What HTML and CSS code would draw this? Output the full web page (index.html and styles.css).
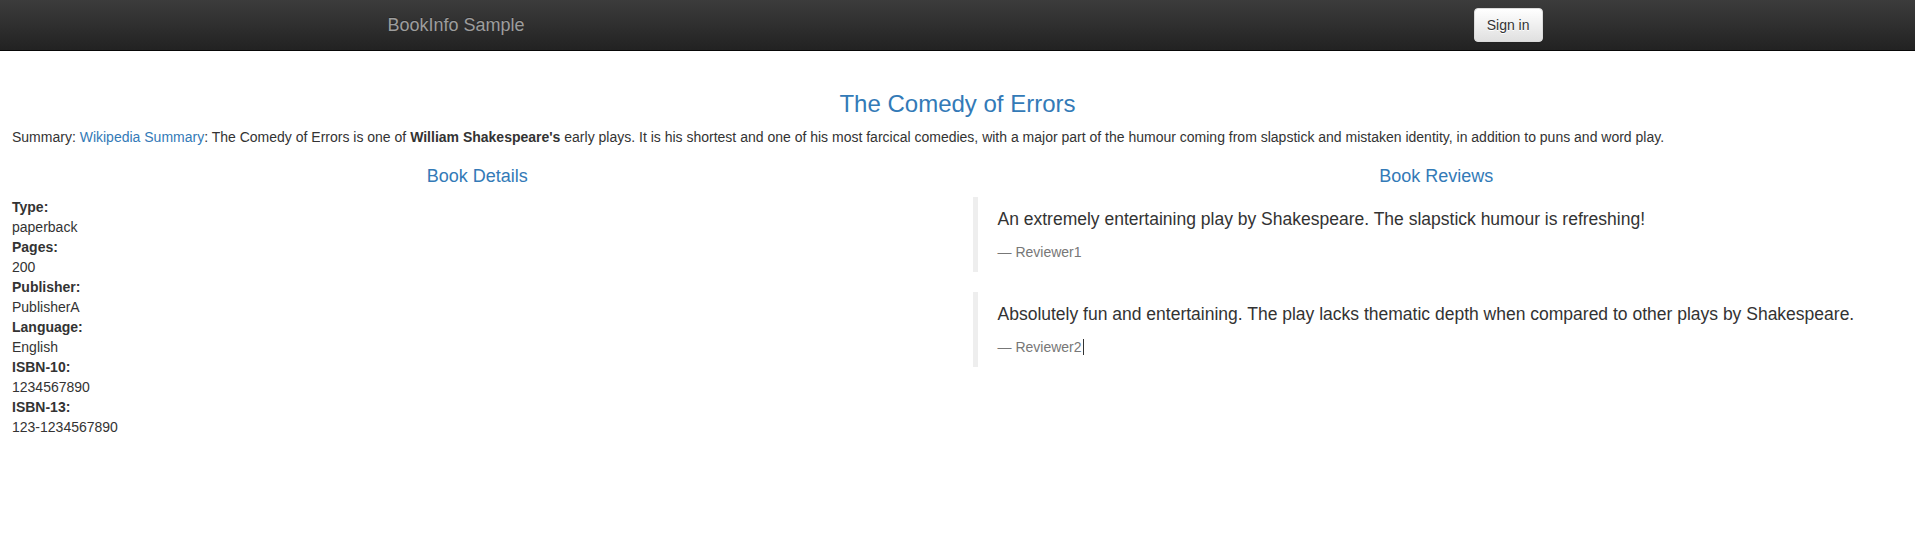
FILE: index.html
```html
<!DOCTYPE html>
<html lang="en">
<head>
<meta charset="utf-8">
<title>Simple Bookstore App</title>
<link rel="stylesheet" href="styles.css">
</head>
<body>
<nav class="navbar">
  <div class="nav-container">
    <a class="navbar-brand" href="#">BookInfo Sample</a>
    <button type="button" class="btn-signin">Sign in</button>
  </div>
</nav>

<main class="page">
  <section class="intro">
    <h3 class="title">The Comedy of Errors</h3>
    <p class="summary">Summary: <a href="#">Wikipedia Summary</a>: The Comedy of Errors is one of <b>William Shakespeare's</b> early plays. It is his shortest and one of his most farcical comedies, with a major part of the humour coming from slapstick and mistaken identity, in addition to puns and word play.</p>
  </section>

  <section class="columns">
    <div class="col col-left">
      <h4 class="col-title">Book Details</h4>
      <dl class="details">
        <dt>Type:</dt><dd>paperback</dd>
        <dt>Pages:</dt><dd>200</dd>
        <dt>Publisher:</dt><dd>PublisherA</dd>
        <dt>Language:</dt><dd>English</dd>
        <dt>ISBN-10:</dt><dd>1234567890</dd>
        <dt>ISBN-13:</dt><dd>123-1234567890</dd>
      </dl>
    </div>
    <div class="col col-right">
      <h4 class="col-title">Book Reviews</h4>
      <blockquote class="review">
        <p>An extremely entertaining play by Shakespeare. The slapstick humour is refreshing!</p>
        <small>Reviewer1</small>
      </blockquote>
      <blockquote class="review">
        <p>Absolutely fun and entertaining. The play lacks thematic depth when compared to other plays by Shakespeare.</p>
        <small>Reviewer2<span class="caret"></span></small>
      </blockquote>
    </div>
  </section>
</main>
</body>
</html>
```

FILE: styles.css
```css
* {
  box-sizing: border-box;
}

html, body {
  margin: 0;
  padding: 0;
}

body {
  font-family: "Liberation Sans", Arial, Helvetica, sans-serif;
  font-size: 14px;
  line-height: 1.42857143;
  color: #333;
  background: #fff;
}

a {
  color: #337ab7;
  text-decoration: none;
}

/* Navbar */
.navbar {
  height: 51px;
  background-color: #222;
  background-image: linear-gradient(to bottom, #3c3c3c 0, #222 100%);
  border-bottom: 1px solid #080808;
  margin-bottom: 20px;
}

.nav-container {
  width: 1170px;
  margin: 0 auto;
  padding: 0 15px;
  display: flex;
  justify-content: space-between;
  align-items: flex-start;
}

.navbar-brand {
  display: block;
  height: 50px;
  padding: 15px;
  margin-left: -15px;
  font-size: 18px;
  line-height: 20px;
  color: #9d9d9d;
  text-shadow: 0 -1px 0 rgba(0, 0, 0, .25);
}

.btn-signin {
  margin: 8px -15px 0 0;
  height: 34px;
  padding: 6px 12px;
  font-family: inherit;
  font-size: 14px;
  line-height: 20px;
  color: #333;
  background-color: #fff;
  background-image: linear-gradient(to bottom, #fff 0, #e0e0e0 100%);
  border: 1px solid #dbdbdb;
  border-radius: 4px;
  text-shadow: 0 1px 0 #fff;
  box-shadow: inset 0 1px 0 rgba(255, 255, 255, .15), 0 1px 1px rgba(0, 0, 0, .075);
  cursor: pointer;
}

/* Page */
.page {
  display: flow-root;
}

.intro {
  padding: 0 12px;
}

.title {
  margin: 20px 0 10px;
  font-size: 24px;
  font-weight: 500;
  line-height: 1.1;
  text-align: center;
  color: #337ab7;
}

.summary {
  margin: 0 0 10px;
}

.columns {
  display: grid;
  grid-template-columns: 1fr 1fr;
}

.col-left {
  padding: 0 15px 0 12px;
}

.col-right {
  padding: 0 15px;
}

.col-title {
  margin: 10px 0;
  font-size: 18px;
  font-weight: 500;
  line-height: 1.1;
  text-align: center;
  color: #337ab7;
}

.details {
  margin: 0 0 20px;
}

.details dt {
  font-weight: bold;
}

.details dd {
  margin: 0;
}

.review {
  margin: 0 0 20px;
  padding: 10px 20px;
  font-size: 17.5px;
  border-left: 5px solid #eee;
}

.review p {
  margin: 0 0 10px;
}

.review small {
  display: block;
  font-size: 80%;
  line-height: 1.42857143;
  color: #777;
}

.review small::before {
  content: "\2014 \00A0";
}

.caret {
  display: inline-block;
  width: 1px;
  height: 16px;
  margin-left: 1px;
  vertical-align: -3px;
  background: #333;
}
```
